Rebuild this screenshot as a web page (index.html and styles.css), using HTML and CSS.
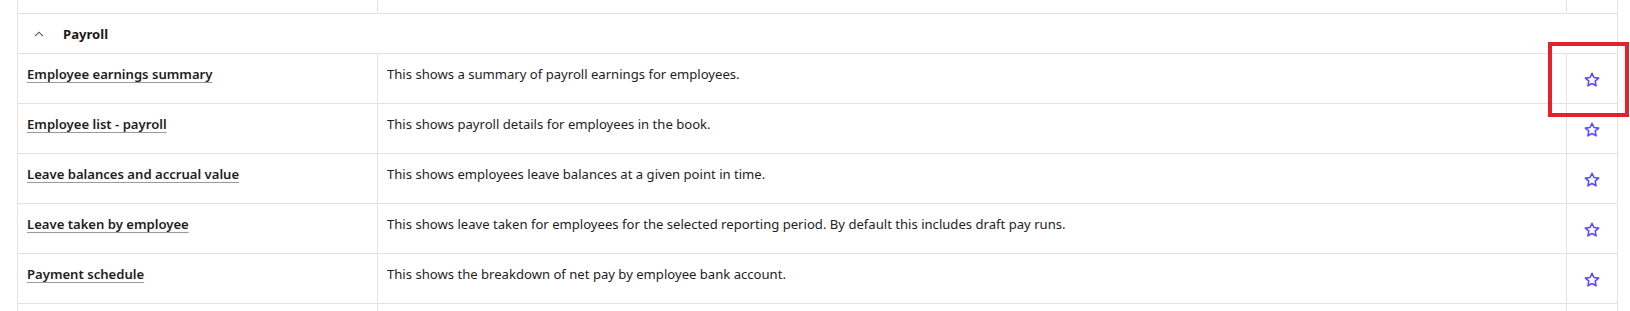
FILE: index.html
```html
<!DOCTYPE html>
<html lang="en">
<head>
<meta charset="utf-8">
<title>Payroll reports</title>
<link rel="stylesheet" href="styles.css">
</head>
<body>
<div class="page">
  <div class="report-table">
    <div class="row stub">
      <div class="cell name"></div>
      <div class="cell desc"></div>
      <div class="cell fav"></div>
    </div>
    <div class="group-header">
      <svg class="chevron" width="10" height="6" viewBox="0 0 10 6"><path d="M1 5.2 L5 1.2 L9 5.2" fill="none" stroke="#555" stroke-width="1.1"/></svg>
      <span class="group-title">Payroll</span>
    </div>
    <div class="row">
      <div class="cell name"><a class="report-link" href="#">Employee earnings summary</a></div>
      <div class="cell desc">This shows a summary of payroll earnings for employees.</div>
      <div class="cell fav"><svg class="star" width="16" height="16" viewBox="0 0 16 16"><path d="M8 1.3 L10 5.5 L14.6 6.1 L11.2 9.2 L12.1 13.8 L8 11.5 L3.9 13.8 L4.8 9.2 L1.4 6.1 L6 5.5 Z" fill="none" stroke="#5b4dff" stroke-width="1.6" stroke-linejoin="round"/></svg></div>
    </div>
    <div class="row">
      <div class="cell name"><a class="report-link" href="#">Employee list - payroll</a></div>
      <div class="cell desc">This shows payroll details for employees in the book.</div>
      <div class="cell fav"><svg class="star" width="16" height="16" viewBox="0 0 16 16"><path d="M8 1.3 L10 5.5 L14.6 6.1 L11.2 9.2 L12.1 13.8 L8 11.5 L3.9 13.8 L4.8 9.2 L1.4 6.1 L6 5.5 Z" fill="none" stroke="#5b4dff" stroke-width="1.6" stroke-linejoin="round"/></svg></div>
    </div>
    <div class="row">
      <div class="cell name"><a class="report-link" href="#">Leave balances and accrual value</a></div>
      <div class="cell desc">This shows employees leave balances at a given point in time.</div>
      <div class="cell fav"><svg class="star" width="16" height="16" viewBox="0 0 16 16"><path d="M8 1.3 L10 5.5 L14.6 6.1 L11.2 9.2 L12.1 13.8 L8 11.5 L3.9 13.8 L4.8 9.2 L1.4 6.1 L6 5.5 Z" fill="none" stroke="#5b4dff" stroke-width="1.6" stroke-linejoin="round"/></svg></div>
    </div>
    <div class="row">
      <div class="cell name"><a class="report-link" href="#">Leave taken by employee</a></div>
      <div class="cell desc">This shows leave taken for employees for the selected reporting period. By default this includes draft pay runs.</div>
      <div class="cell fav"><svg class="star" width="16" height="16" viewBox="0 0 16 16"><path d="M8 1.3 L10 5.5 L14.6 6.1 L11.2 9.2 L12.1 13.8 L8 11.5 L3.9 13.8 L4.8 9.2 L1.4 6.1 L6 5.5 Z" fill="none" stroke="#5b4dff" stroke-width="1.6" stroke-linejoin="round"/></svg></div>
    </div>
    <div class="row">
      <div class="cell name"><a class="report-link" href="#">Payment schedule</a></div>
      <div class="cell desc">This shows the breakdown of net pay by employee bank account.</div>
      <div class="cell fav"><svg class="star" width="16" height="16" viewBox="0 0 16 16"><path d="M8 1.3 L10 5.5 L14.6 6.1 L11.2 9.2 L12.1 13.8 L8 11.5 L3.9 13.8 L4.8 9.2 L1.4 6.1 L6 5.5 Z" fill="none" stroke="#5b4dff" stroke-width="1.6" stroke-linejoin="round"/></svg></div>
    </div>
    <div class="row tail">
      <div class="cell name"></div>
      <div class="cell desc"></div>
      <div class="cell fav"></div>
    </div>
  </div>
  <div class="highlight"></div>
</div>
</body>
</html>
```

FILE: styles.css
```css
* { box-sizing: border-box; }
html, body {
  margin: 0;
  padding: 0;
  background: #ffffff;
}
body {
  font-family: "Noto Sans", "Open Sans", sans-serif;
  font-size: 13.1px;
  color: #1e1e1e;
  width: 1630px;
  height: 311px;
  overflow: hidden;
}
.page {
  position: relative;
  height: 311px;
  padding-left: 17px;
}
.report-table {
  width: 1601px;
  border-left: 1px solid #e2e2e2;
  border-right: 1px solid #e2e2e2;
}
.row {
  display: grid;
  grid-template-columns: 360px 1189px 50px;
  height: 50px;
  border-bottom: 1px solid #e2e2e2;
}
.row.stub { height: 14px; }
.row.tail { height: 10px; border-bottom: none; }
.cell {
  padding: 10px 9px 0 9px;
  line-height: 20px;
}
.cell.name, .cell.desc { border-right: 1px solid #e2e2e2; }
.cell.fav {
  display: flex;
  justify-content: center;
  align-items: center;
  padding: 2px 0 0 0;
}
.report-link {
  color: #1e1e1e;
  font-weight: 600;
  text-decoration: underline;
  text-decoration-color: #9a9a9a;
  text-underline-offset: 3px;
}
.group-header {
  display: flex;
  align-items: center;
  height: 40px;
  border-bottom: 1px solid #e2e2e2;
  padding-left: 16px;
}
.chevron { margin-right: 19px; }
.group-title {
  font-weight: 700;
  font-size: 13.1px;
  color: #1a1a1a;
}
.highlight {
  position: absolute;
  left: 1548px;
  top: 42px;
  width: 81px;
  height: 75px;
  border: 4px solid #e3222a;
}
```
